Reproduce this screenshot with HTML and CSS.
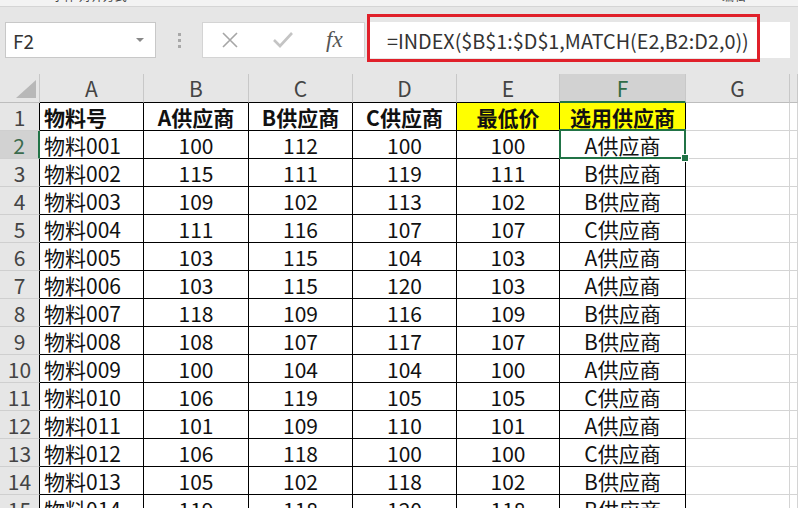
FILE: index.html
```
<html>
<head>
    <title>供应商比价</title>
    <link rel="stylesheet" href="styles.css">
</head>
<body>
    <div class="ribbon-edge">
        <span class="rib-a">字体 对齐方式</span>
        <span class="rib-b">编辑</span>
    </div>
    <div class="formula-row">
        <div class="name-box">
            <span>F2</span>
            <span class="drop"></span>
        </div>
        <div class="grip"><i></i><i></i><i></i></div>
        <div class="fx-buttons">
            <svg class="ico" width="20" height="20" viewBox="0 0 20 20">
                <path d="M3 3 L17 17 M17 3 L3 17" stroke="#a6a6a6" stroke-width="1.6" fill="none"/>
            </svg>
            <svg class="ico" width="22" height="20" viewBox="0 0 22 20">
                <path d="M2 10 L8 16 L20 3" stroke="#c4c4c4" stroke-width="2.6" fill="none"/>
            </svg>
            <span class="fx">fx</span>
        </div>
        <div class="formula">
            <span class="formula-text">=INDEX($B$1:$D$1,MATCH(E2,B2:D2,0))</span>
            <div class="mark"></div>
        </div>
    </div>

    <div class="sheet" id="sheet"></div>

    <script>
var rows = [
    ["物料号", "A供应商", "B供应商", "C供应商", "最低价", "选用供应商"],
    ["物料001", 100, 112, 100, 100, "A供应商"],
    ["物料002", 115, 111, 119, 111, "B供应商"],
    ["物料003", 109, 102, 113, 102, "B供应商"],
    ["物料004", 111, 116, 107, 107, "C供应商"],
    ["物料005", 103, 115, 104, 103, "A供应商"],
    ["物料006", 103, 115, 120, 103, "A供应商"],
    ["物料007", 118, 109, 116, 109, "B供应商"],
    ["物料008", 108, 107, 117, 107, "B供应商"],
    ["物料009", 100, 104, 104, 100, "A供应商"],
    ["物料010", 106, 119, 105, 105, "C供应商"],
    ["物料011", 101, 109, 110, 101, "A供应商"],
    ["物料012", 106, 118, 100, 100, "C供应商"],
    ["物料013", 105, 102, 118, 102, "B供应商"],
    ["物料014", 119, 118, 120, 118, "B供应商"]
];
var letters = ["A", "B", "C", "D", "E", "F", "G", ""];

function cell(cls, text) {
    var d = document.createElement("div");
    d.className = cls;
    d.textContent = text;
    return d;
}

function build() {
    var s = document.getElementById("sheet");
    s.appendChild(cell("corner", ""));
    for (var i = 0; i < letters.length; i++) {
        var c = "colhead";
        if (i < 6) c += " dark";
        if (i == 5) c += " cur";
        s.appendChild(cell(c, letters[i]));
    }
    for (var r = 0; r < rows.length; r++) {
        s.appendChild(cell(r == 1 ? "rowhead cur" : "rowhead", r + 1));
        for (var k = 0; k < 6; k++) {
            var c = "c";
            if (k == 0) c += " left";
            if (r == 0) c += " bold";
            if (r == 0 && k >= 4) c += " yellow";
            if (r == 1 && k == 5) c += " sel";
            s.appendChild(cell(c, rows[r][k]));
        }
        s.appendChild(cell("c empty", ""));
        s.appendChild(cell("c empty", ""));
    }
}
build();
    </script>
</body>
</html>
```

FILE: styles.css
```
body {
    margin: 0;
    width: 798px;
    height: 508px;
    overflow: hidden;
    background: #fff;
    font-family: "Noto Sans CJK SC", "Liberation Sans", sans-serif;
}
.ribbon-edge {
    height: 6px;
    background: #f3f3f3;
    border-bottom: 1px solid #d5d5d5;
    overflow: hidden;
    position: relative;
    font-size: 12px;
    color: #444;
}
.rib-a, .rib-b {
    position: absolute;
    top: -13px;
}
.rib-a { left: 52px; }
.rib-b { left: 722px; }

.formula-row {
    height: 67px;
    background: #e6e6e6;
    display: flex;
    align-items: flex-start;
    padding: 15px 0 0 5px;
    box-sizing: border-box;
}
.name-box {
    width: 151px;
    height: 36px;
    box-sizing: border-box;
    background: #fff;
    border: 1px solid #c8c8c8;
    display: flex;
    align-items: center;
    justify-content: space-between;
    padding: 0 11px 0 7px;
    font-size: 19px;
    color: #333;
}
.drop {
    width: 0;
    height: 0;
    border-left: 4px solid transparent;
    border-right: 4px solid transparent;
    border-top: 4px solid #888;
}
.grip {
    width: 46px;
    height: 36px;
    display: flex;
    flex-direction: column;
    align-items: center;
    justify-content: center;
    gap: 3px;
}
.grip i {
    width: 3px;
    height: 3px;
    background: #a8a8a8;
}
.fx-buttons {
    width: 163px;
    height: 36px;
    box-sizing: border-box;
    background: #fff;
    border: 1px solid #d4d4d4;
    display: flex;
    align-items: center;
    padding-left: 17px;
    gap: 32px;
}
.fx {
    font-family: "Liberation Serif", serif;
    font-style: italic;
    font-size: 23px;
    color: #555;
}
.formula {
    position: relative;
    width: 423px;
    height: 36px;
    margin-left: 2px;
    background: #fff;
    display: flex;
    align-items: center;
    padding-left: 20px;
    box-sizing: border-box;
    font-size: 19.8px;
    color: #333;
}
.mark {
    position: absolute;
    left: 0;
    top: -8px;
    width: 393px;
    height: 48px;
    box-sizing: border-box;
    border: 3px solid #e0202a;
}

.sheet {
    display: grid;
    grid-template-columns: 40px 104px 105px 104px 104px 103px 126px 104px 1fr;
    grid-template-rows: 29px;
    grid-auto-rows: 28px;
    font-size: 21px;
    color: #111;
}
.sheet > div {
    box-sizing: border-box;
    display: flex;
    align-items: center;
    justify-content: center;
    white-space: nowrap;
}
.corner {
    background: #e6e6e6;
    border-right: 1px solid #c8c8c8;
    border-bottom: 1px solid #bdbdbd;
    position: relative;
}
.corner::after {
    content: "";
    position: absolute;
    right: 3px;
    bottom: 4px;
    border-left: 20px solid transparent;
    border-bottom: 18px solid #b8b8b8;
}
.colhead {
    background: #e6e6e6;
    border-right: 1px solid #c8c8c8;
    border-bottom: 1px solid #bdbdbd;
    color: #444;
}
.colhead.dark {
    border-bottom-color: #000;
}
.colhead.cur {
    background: #d2d2d2;
    border-bottom: 2px solid #217346;
    color: #2f6b46;
}
.rowhead {
    background: #e6e6e6;
    border-right: 1px solid #000;
    border-bottom: 1px solid #cfcfcf;
    color: #444;
}
.rowhead.cur {
    background: #d2d2d2;
    border-right: 2px solid #217346;
    color: #3b6b4d;
}
.c {
    border-right: 1px solid #000;
    border-bottom: 1px solid #000;
}
.c.left {
    justify-content: flex-start;
    padding-left: 4px;
}
.c.bold {
    font-weight: bold;
}
.c.yellow {
    background: #ffff00;
}
.c.empty {
    border-right: 1px solid #d4d4d4;
    border-bottom: 1px solid #d4d4d4;
}
.c.sel {
    position: relative;
}
.c.sel::after {
    content: "";
    position: absolute;
    left: -1px;
    top: -2px;
    right: -1px;
    bottom: -1px;
    border: 2px solid #217346;
}
.c.sel::before {
    content: "";
    position: absolute;
    right: -4px;
    bottom: -4px;
    width: 6px;
    height: 6px;
    background: #217346;
    border: 1px solid #fff;
    z-index: 1;
}
```
